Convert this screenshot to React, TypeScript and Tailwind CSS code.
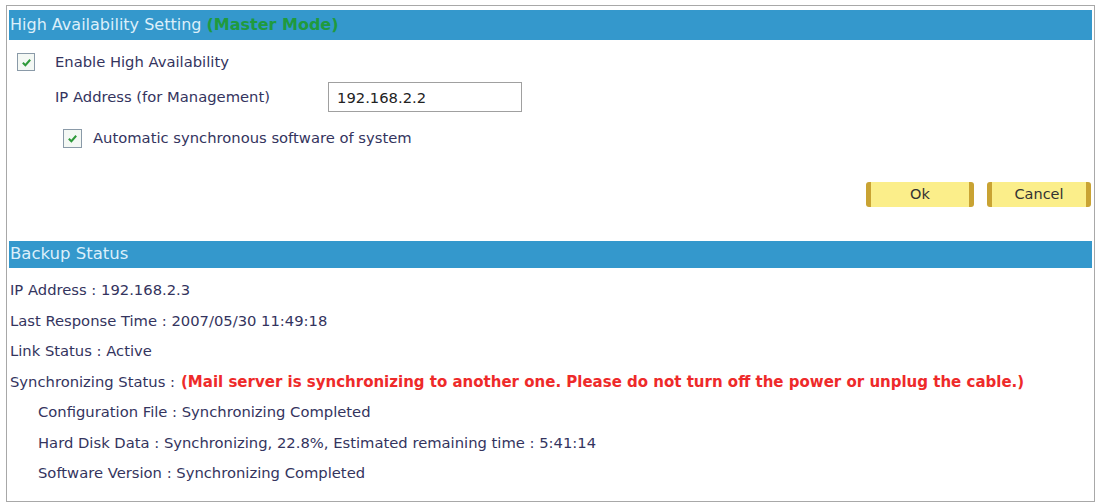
import React from 'react';

function Check({ className }: { className: string }) {
  return (
    <span className={`inline-flex items-center justify-center bg-[#f4f8f4] border border-[#8a9aa8] ${className}`}>
      <svg viewBox="0 0 12 12" className="w-[11px] h-[11px]">
        <path d="M2 6.2 L4.8 9 L10 3" fill="none" stroke="#2e9a3a" strokeWidth="2.2" />
      </svg>
    </span>
  );
}

function YellowButton({ label, width }: { label: string; width: string }) {
  return (
    <button
      className={`${width} h-[25px] flex items-center justify-center bg-[#fbee8a] border-l-[5px] border-r-[5px] border-l-[#c9a333] border-r-[#c9a333] rounded-[3px] text-[14.5px] text-[#333]`}
    >
      {label}
    </button>
  );
}

export default function App() {
  const backupRows = [
    'IP Address : 192.168.2.3',
    'Last Response Time : 2007/05/30 11:49:18',
    'Link Status : Active',
  ];
  const subRows = [
    'Configuration File : Synchronizing Completed',
    'Hard Disk Data : Synchronizing, 22.8%, Estimated remaining time : 5:41:14',
    'Software Version : Synchronizing Completed',
  ];

  return (
    <div className="w-[1100px] h-[503px] bg-white pt-[5px] pl-[6px] font-['DejaVu_Sans',Verdana,sans-serif] text-[#34345e] text-[14.75px]">
      <div className="w-[1089px] h-[497px] border border-[#a8a8a8] px-[2px] pt-[4px] flex flex-col">
        {/* High Availability Setting */}
        <div className="h-[30px] bg-[#3498cc] flex items-center pl-[1px] text-[16px] text-[#dceffa]">
          <span>High Availability Setting</span>
          <span className="ml-[5px] text-[#1f9a3e] font-bold">(Master Mode)</span>
        </div>

        <div className="mt-[7px] h-[30px] flex items-center pl-[8px]">
          <Check className="w-[18px] h-[18px]" />
          <span className="ml-[20px]">Enable High Availability</span>
        </div>

        <div className="mt-[5px] h-[30px] flex items-center pl-[46px]">
          <span className="w-[273px]">IP Address (for Management)</span>
          <input
            readOnly
            value="192.168.2.2"
            className="w-[194px] h-[30px] border border-[#a0a0a0] px-[8px] text-[14.75px] text-[#222] bg-white outline-none"
          />
        </div>

        <div className="mt-[11px] h-[30px] flex items-center pl-[54px]">
          <Check className="w-[19px] h-[19px]" />
          <span className="ml-[11px]">Automatic synchronous software of system</span>
        </div>

        <div className="mt-[29px] h-[25px] flex justify-end gap-[13px] pr-[1px]">
          <YellowButton label="Ok" width="w-[108px]" />
          <YellowButton label="Cancel" width="w-[104px]" />
        </div>

        {/* Backup Status */}
        <div className="mt-[34px] h-[27px] bg-[#3498cc] flex items-center pl-[1px] text-[16.5px] text-[#dceffa]">
          Backup Status
        </div>

        <div className="mt-[7px] flex flex-col">
          {backupRows.map((t) => (
            <div key={t} className="h-[30.5px] flex items-center pl-[1px]">
              {t}
            </div>
          ))}
          <div className="h-[30.5px] flex items-center pl-[1px] whitespace-nowrap">
            <span>Synchronizing Status :</span>
            <span className="ml-[6px] text-[15px] text-[#ee2a2a] font-bold">
              (Mail server is synchronizing to another one. Please do not turn off the power or unplug the cable.)
            </span>
          </div>
          {subRows.map((t) => (
            <div key={t} className="h-[30.5px] flex items-center pl-[29px]">
              {t}
            </div>
          ))}
        </div>
      </div>
    </div>
  );
}
